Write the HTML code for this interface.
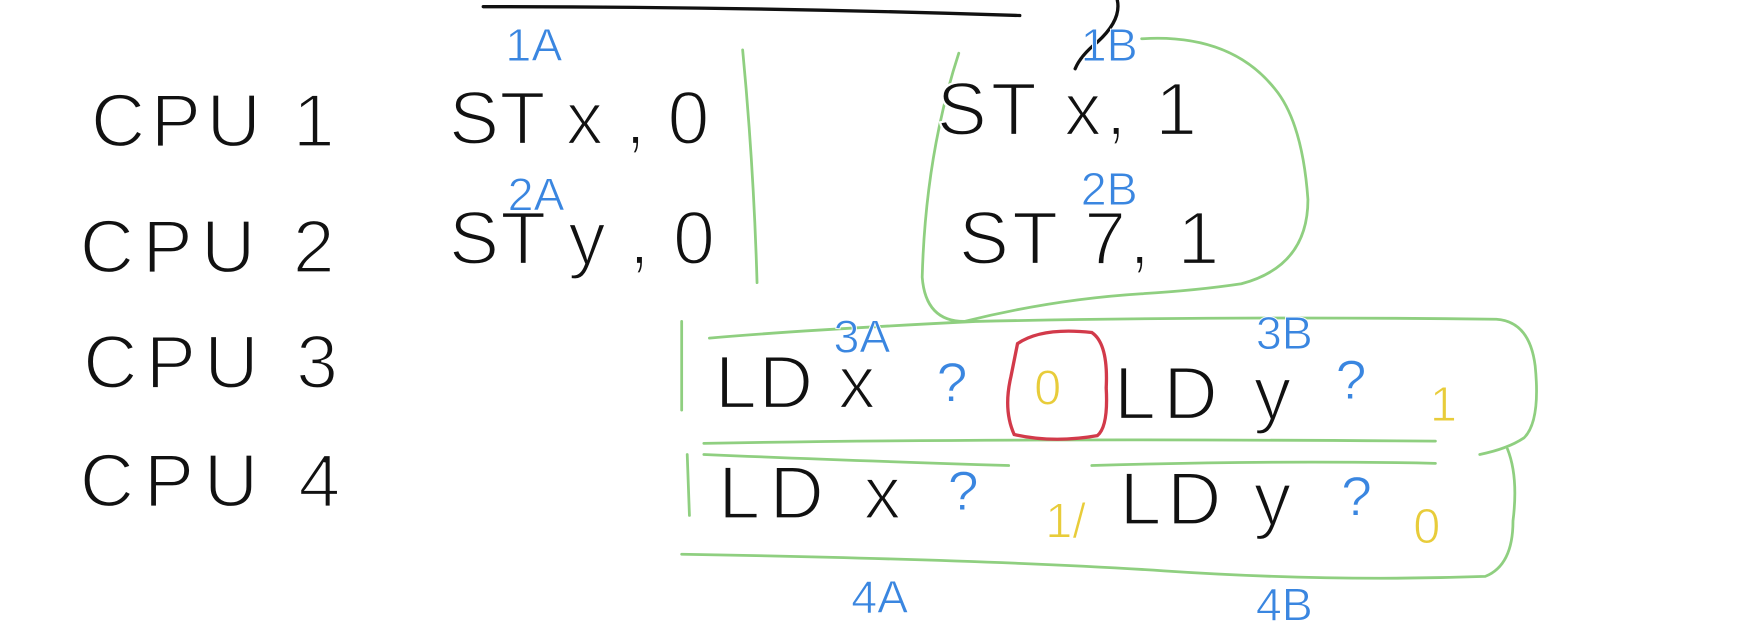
<!DOCTYPE html>
<html><head><style>html,body{margin:0;padding:0;background:#fff;overflow:hidden}svg{display:block}
text{font-family:"Liberation Sans",sans-serif;}
.k{fill:#111;font-size:68px;stroke:#fff;stroke-width:2}
.b{fill:#3a86e0;font-size:42px;stroke:#fff;stroke-width:0.8}
.y{fill:#e8cc3a;font-size:44px;stroke:#fff;stroke-width:1}
</style></head><body>
<svg width="1738" height="644" viewBox="0 0 1568 581" preserveAspectRatio="none">
<g fill="none" stroke-linecap="round">
<path d="M436 6 Q680 6 920 14 M1008 0 Q1012 18 990 38 Q975 50 970 62" stroke="#111" stroke-width="3"/>
<path d="M670 45 Q680 150 683 255" stroke="#8fcf80" stroke-width="2.5"/>
<path d="M865 48 Q835 140 832 250 Q835 290 870 290 Q950 270 1030 265 Q1080 262 1120 256 Q1180 240 1180 180 Q1175 110 1150 80 Q1110 30 1030 35" stroke="#8fcf80" stroke-width="2.5"/>
<path d="M615 290 L615 370 M640 305 Q720 298 880 290 Q1100 285 1350 288 Q1380 290 1385 330 Q1390 380 1375 395 Q1360 405 1335 410" stroke="#8fcf80" stroke-width="2.5"/>
<path d="M635 400 Q900 395 1295 398 M635 410 Q750 415 910 420 M985 420 Q1150 415 1295 418" stroke="#8fcf80" stroke-width="2.5"/>
<path d="M620 410 L622 465 M615 500 Q900 505 1050 515 Q1200 525 1340 520 Q1365 510 1365 470 Q1370 430 1360 405" stroke="#8fcf80" stroke-width="2.5"/>
<path d="M918 310 Q940 295 985 300 Q1000 310 998 350 Q1000 385 990 393 Q950 400 915 392 Q905 370 912 340 Z" stroke="#d23a4a" stroke-width="3"/>
</g>
<text class="b" x="456" y="55">1A</text>
<text class="b" x="975" y="55">1B</text>
<text class="b" x="458" y="190">2A</text>
<text class="b" x="975" y="185">2B</text>
<text class="b" x="752" y="318">3A</text>
<text class="b" x="1133" y="315">3B</text>
<text class="b" x="768" y="553">4A</text>
<text class="b" x="1133" y="560">4B</text>
<text class="k" x="82" y="132" textLength="220">CPU 1</text>
<text class="k" x="72" y="246" textLength="230">CPU 2</text>
<text class="k" x="75" y="350" textLength="230">CPU 3</text>
<text class="k" x="72" y="457" textLength="235">CPU 4</text>
<text class="k" x="405" y="130" textLength="235">ST x , 0</text>
<text class="k" x="405" y="238" textLength="240">ST y , 0</text>
<text class="k" x="845" y="122" textLength="235">ST x, 1</text>
<text class="k" x="865" y="238" textLength="235">ST 7, 1</text>
<text class="k" x="645" y="368" textLength="145">LD x</text>
<text class="k" x="1005" y="378" textLength="160">LD y</text>
<text class="k" x="648" y="468" textLength="165">LD x</text>
<text class="k" x="1010" y="473" textLength="155">LD y</text>
<text class="b" x="845" y="362" style="font-size:50px">?</text>
<text class="b" x="1205" y="360" style="font-size:50px">?</text>
<text class="b" x="855" y="460" style="font-size:50px">?</text>
<text class="b" x="1210" y="465" style="font-size:50px">?</text>
<text class="y" x="933" y="365">0</text>
<text class="y" x="1290" y="380">1</text>
<text class="y" x="943" y="485">1/</text>
<text class="y" x="1275" y="490">0</text>
</svg>
</body></html>
